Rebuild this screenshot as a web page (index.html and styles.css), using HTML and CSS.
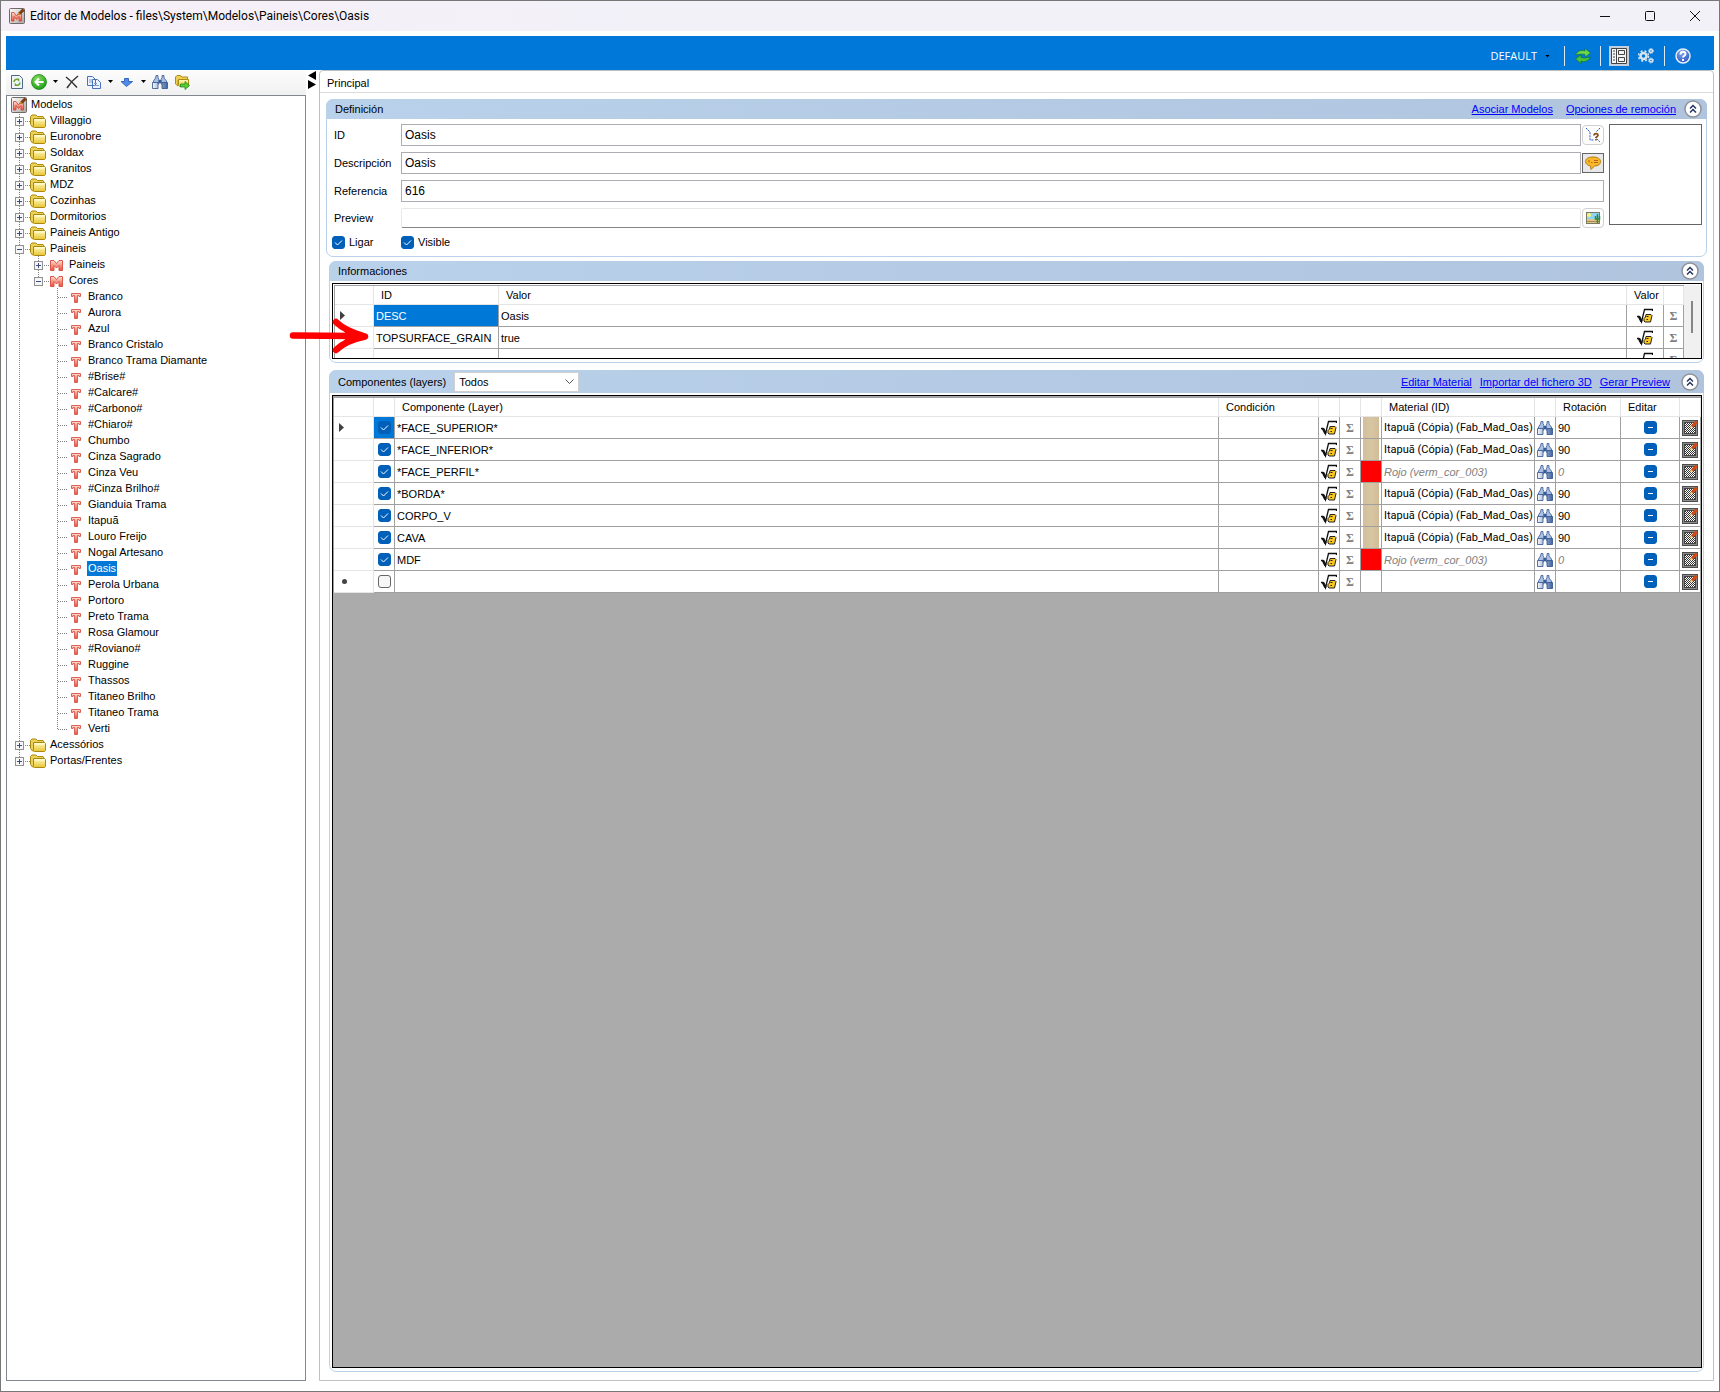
FILE: index.html
```html
<!DOCTYPE html>
<html lang="es">
<head>
<meta charset="utf-8">
<meta name="viewport" content="width=device-width, initial-scale=1">
<title>Editor de Modelos</title>
<link rel="stylesheet" href="styles.css">
</head>
<body>
<svg class="defs" aria-hidden="true">
  <defs>
    <linearGradient id="gold" x1="0" y1="0" x2="0" y2="1"><stop offset="0" stop-color="#fffbc0"/><stop offset="1" stop-color="#e9c32e"/></linearGradient>
    <linearGradient id="red" x1="0" y1="0" x2="0" y2="1"><stop offset="0" stop-color="#fde0cf"/><stop offset="1" stop-color="#ee4a34"/></linearGradient>
    <linearGradient id="silver" x1="0" y1="0" x2="1" y2="1"><stop offset="0" stop-color="#ffffff"/><stop offset="1" stop-color="#a8a4a0"/></linearGradient>
    <linearGradient id="steel" x1="0" y1="0" x2="1" y2="0"><stop offset="0" stop-color="#f4f8fc"/><stop offset="1" stop-color="#3f64a4"/></linearGradient>
    <radialGradient id="leaf" cx=".4" cy=".3" r=".8"><stop offset="0" stop-color="#8be060"/><stop offset="1" stop-color="#0f9410"/></radialGradient>
    <radialGradient id="orb" cx=".4" cy=".25" r=".9"><stop offset="0" stop-color="#86a8f0"/><stop offset="1" stop-color="#1c46b8"/></radialGradient>
    <pattern id="checker" width="2" height="2" patternUnits="userSpaceOnUse"><path fill="#fff" d="M0 0h2v2H0z"/><path fill="#333" d="M0 0h1v1H0zM1 1h1v1H1z"/></pattern>
  </defs>
  <symbol id="app" viewBox="0 0 16 16"><rect x=".5" y=".5" width="15" height="15" rx="1" fill="url(#silver)" stroke="#706a66"/><path d="M2.500 13V4.500h2.500l2.500 3.500 2.500-3.500h2.500V13h-2.500V8.500L7.500 11.500 5 8.500V13z" fill="url(#red)" stroke="#d8402c" stroke-width=".8"/><path d="M8.500 7l1-2.500L13.500.5 16 2.500 11.500 6.500z" fill="#7a3f12"/><path d="M8.500 7l1-2.500 1.500 1.500z" fill="#e8a33c"/></symbol>
  <symbol id="folder" viewBox="0 0 16 16"><path d="M.5 11.500v-8L2 2h4l1.500 1.500h5.500L14 5v2H4v7H2.500z" fill="#ecd058" stroke="#a98a10"/><path d="M3.500 5.500h11l1 1v7l-1 1h-10l-1-1z" fill="url(#gold)" stroke="#a98a10"/><path d="M4.500 7h10" stroke="#fffde0"/></symbol>
  <symbol id="m" viewBox="0 0 16 16"><path d="M1.500 13.500v-10h3.500L7.500 6.500 10 3.500h3.500v10H10V8.500L7.500 11 5 8.500v5z" fill="url(#red)" stroke="#d9574b"/></symbol>
  <symbol id="t" viewBox="0 0 16 16"><path d="M3.500 4.500h9v3H11V6.500H9.500v7h-3v-7H5v1H3.500z" fill="url(#red)" stroke="#d9625a"/></symbol>
  <symbol id="binoc" viewBox="0 0 16 16"><path d="M4 1.500h2v2l1 2V10H1.500V7L3.500 4z M10 1.500h2v2.500l2.500 3v3H9V5.500l1-2z" fill="#a9c0e2" stroke="#3a5c96" stroke-width=".8"/><path d="M6.500 6h3v3h-3z" fill="#3a5c96"/><path d="M.5 8.500h5.500v6H.5zM10 8.500h5.500v6H10z" fill="url(#steel)" stroke="#2c508c" stroke-width=".8"/></symbol>
  <symbol id="root" viewBox="0 0 16 16"><path d="M0 8.500h2l2.500 5.500L7.500 1.500H15.500V3" fill="none" stroke="#111" stroke-width="1.300"/><path d="M2 8.500l2.500 5" stroke="#111" stroke-width="2.500"/><path d="M9 6.500h5l1 1-1.500 6.500H8l-1-1v-2.500l1.500-1.500z" fill="#fcc81e" stroke="#222"/><path d="M9.500 8.500h2M9.500 11.500h1.500" stroke="#222" stroke-width="1.200"/></symbol>
  <symbol id="paint" viewBox="0 0 16 16"><rect x=".5" y=".5" width="15" height="15" fill="#8c8c8c" stroke="#4c4c4c"/><rect x="2.500" y="2.500" width="11" height="11" fill="url(#checker)" stroke="#444"/><path d="M9 5.500L13.500.5 16 3l-5 4.500z" fill="#d14a12"/><path d="M7.500 8.500l1.500-3 2 2z" fill="#f4d28a"/></symbol>
  <symbol id="up" viewBox="0 0 18 18"><circle cx="9" cy="9" r="8" fill="#fff" stroke="#8f9299" stroke-width="1.500"/><path d="M6 8.500l3-3 3 3M6 12.500l3-3 3 3" fill="none" stroke="#26355e" stroke-width="1.500"/></symbol>
</svg>

<div class="window">
  <header class="titlebar">
    <svg class="i16"><use href="#app"/></svg>
    <h1>Editor de Modelos - files\System\Modelos\Paineis\Cores\Oasis</h1>
    <button class="winbtn" aria-label="Minimizar"><svg width="12" height="12"><path d="M1 6.500h10" stroke="#111"/></svg></button>
    <button class="winbtn" aria-label="Maximizar"><svg width="12" height="12"><rect x="1.500" y="1.500" width="9" height="9" rx="1" fill="none" stroke="#111"/></svg></button>
    <button class="winbtn" aria-label="Cerrar"><svg width="12" height="12"><path d="M1 1l10 10M11 1L1 11" stroke="#111"/></svg></button>
  </header>

  <div class="ribbon">
    <button class="profile">DEFAULT <i class="caret"></i></button>
    <span class="bar"></span>
    <button class="tool" aria-label="Actualizar"><svg class="i16" viewBox="0 0 16 16"><path d="M.5 7C2 3.500 6 1.500 10 3V.5L15.500 5 10 9V6.500C7 5.500 4 6 .5 7z" fill="#6ed84c" stroke="#157018" stroke-width=".6"/><path d="M15.500 9C14 12.500 10 14.500 6 13v2.500L.5 11 6 7v2.500c3 1 6 .5 9.500-.5z" fill="#4cc23c" stroke="#157018" stroke-width=".6"/></svg></button>
    <span class="bar"></span>
    <button class="tool active" aria-label="Formulario"><svg width="16" height="16"><path fill="#f4f4f4" stroke="#444" d="M.5.5h15v15H.5z"/><path d="M5.500 0v16M7.500 2.500h6v4h-6zM7.500 9.500h6v4h-6z" fill="none" stroke="#444"/><path d="M2 3h2M2 6h2M2 9h2M2 12h2" stroke="#444"/></svg></button>
    <button class="tool" aria-label="Ajustes"><svg width="16" height="16" fill="none" stroke="#d9e4ee"><circle cx="5.500" cy="8" r="3" stroke-width="2.500"/><circle cx="5.500" cy="8" r="5" stroke-width="1.500" stroke-dasharray="2 2"/><circle cx="13" cy="3" r="1.500" stroke-width="1.500"/><circle cx="13" cy="3" r="2.500" stroke-dasharray="1 1"/><circle cx="13" cy="12.500" r="1.500" stroke-width="1.500"/><circle cx="13" cy="12.500" r="2.500" stroke-dasharray="1 1"/></svg></button>
    <span class="bar"></span>
    <button class="tool" aria-label="Ayuda"><svg width="16" height="16"><circle cx="8" cy="8" r="7" fill="url(#orb)" stroke="#e8eefa" stroke-width="1.500"/><path d="M5.500 6.500C5.500 3 10.500 3 10.500 6c0 1.500-2.500 2-2.500 3.500M8 11v2" fill="none" stroke="#fff" stroke-width="2"/></svg></button>
  </div>

  <div class="workspace">
    <aside class="side">
      <div class="toolbar">
        <button class="tb" aria-label="Recargar"><svg class="i16"><path d="M2.500 1.500h8l3 3v10h-11z" fill="#eef4fa" stroke="#4d6a85"/><path d="M5 8c0-2.500 3-3.500 4.500-2V4.500M11 8.500c0 2.500-3 3.500-4.500 2V12" fill="none" stroke="#6ba32c" stroke-width="1.500"/></svg></button>
        <button class="tb" aria-label="Atrás"><svg class="i16"><circle cx="8" cy="8" r="7.500" fill="url(#leaf)" stroke="#108010" stroke-width=".7"/><path d="M12.500 8H5M8 4.500L4.500 8 8 11.500" fill="none" stroke="#fff" stroke-width="2"/></svg><i class="caret"></i></button>
        <button class="tb" aria-label="Eliminar"><svg class="i16"><path d="M2 3C6 6 10 10 13 13.500M14 2C10 5 6 9 3 14" stroke="#333" stroke-width="1.500" fill="none"/></svg></button>
        <button class="tb" aria-label="Copiar"><svg class="i16"><path d="M1.500 2.500h5l3 3v6h-8zM6.500 5.500h5l3 3v6h-8z" fill="#eef4ff" stroke="#4a70b8"/><path d="M3 6h4M3 8h3M8 9.500h3M8 11.500h5" stroke="#7d9cd4"/></svg><i class="caret"></i></button>
        <button class="tb" aria-label="Bajar"><svg class="i16"><path d="M5.500 4.500h4v3h4L7.500 12.500 2 7.500h3.500z" fill="#4f8ae8" stroke="#3468c0"/></svg><i class="caret"></i></button>
        <button class="tb" aria-label="Buscar"><svg class="i16"><use href="#binoc"/></svg></button>
        <button class="tb" aria-label="Exportar"><svg class="i16"><path d="M1.500 10V3L3 1.500h3.500L8 3h5.500v3H4v6z" fill="#ecd058" stroke="#b08c10"/><path d="M4.500 5.500h10v7h-9l-1-1z" fill="url(#gold)" stroke="#b08c10"/><path d="M6.500 10H11V7.500l4.500 4-4.500 4V13H6.500z" fill="#5ccc34" stroke="#1f8a16" stroke-width=".8"/></svg></button>
      </div>
      <nav class="tree">
        <div class="row root"><svg class="i16"><use href="#app"/></svg><a href="#">Modelos</a></div>
        <ul>
          <li><div class="row"><button class="exp plus" aria-label="Abrir"></button><i class="stub"></i><svg class="i16"><use href="#folder"/></svg><a href="#">Villaggio</a></div></li>
          <li><div class="row"><button class="exp plus" aria-label="Abrir"></button><i class="stub"></i><svg class="i16"><use href="#folder"/></svg><a href="#">Euronobre</a></div></li>
          <li><div class="row"><button class="exp plus" aria-label="Abrir"></button><i class="stub"></i><svg class="i16"><use href="#folder"/></svg><a href="#">Soldax</a></div></li>
          <li><div class="row"><button class="exp plus" aria-label="Abrir"></button><i class="stub"></i><svg class="i16"><use href="#folder"/></svg><a href="#">Granitos</a></div></li>
          <li><div class="row"><button class="exp plus" aria-label="Abrir"></button><i class="stub"></i><svg class="i16"><use href="#folder"/></svg><a href="#">MDZ</a></div></li>
          <li><div class="row"><button class="exp plus" aria-label="Abrir"></button><i class="stub"></i><svg class="i16"><use href="#folder"/></svg><a href="#">Cozinhas</a></div></li>
          <li><div class="row"><button class="exp plus" aria-label="Abrir"></button><i class="stub"></i><svg class="i16"><use href="#folder"/></svg><a href="#">Dormitorios</a></div></li>
          <li><div class="row"><button class="exp plus" aria-label="Abrir"></button><i class="stub"></i><svg class="i16"><use href="#folder"/></svg><a href="#">Paineis Antigo</a></div></li>
          <li><div class="row"><button class="exp" aria-label="Cerrar"></button><i class="stub"></i><svg class="i16"><use href="#folder"/></svg><a href="#">Paineis</a></div>
            <ul>
              <li><div class="row"><button class="exp plus" aria-label="Abrir"></button><i class="stub"></i><svg class="i16"><use href="#m"/></svg><a href="#">Paineis</a></div></li>
              <li><div class="row"><button class="exp" aria-label="Cerrar"></button><i class="stub"></i><svg class="i16"><use href="#m"/></svg><a href="#">Cores</a></div>
                <ul class="leaves">
                  <li><div class="row"><i class="stub"></i><svg class="i16"><use href="#t"/></svg><a href="#">Branco</a></div></li>
                  <li><div class="row"><i class="stub"></i><svg class="i16"><use href="#t"/></svg><a href="#">Aurora</a></div></li>
                  <li><div class="row"><i class="stub"></i><svg class="i16"><use href="#t"/></svg><a href="#">Azul</a></div></li>
                  <li><div class="row"><i class="stub"></i><svg class="i16"><use href="#t"/></svg><a href="#">Branco Cristalo</a></div></li>
                  <li><div class="row"><i class="stub"></i><svg class="i16"><use href="#t"/></svg><a href="#">Branco Trama Diamante</a></div></li>
                  <li><div class="row"><i class="stub"></i><svg class="i16"><use href="#t"/></svg><a href="#">#Brise#</a></div></li>
                  <li><div class="row"><i class="stub"></i><svg class="i16"><use href="#t"/></svg><a href="#">#Calcare#</a></div></li>
                  <li><div class="row"><i class="stub"></i><svg class="i16"><use href="#t"/></svg><a href="#">#Carbono#</a></div></li>
                  <li><div class="row"><i class="stub"></i><svg class="i16"><use href="#t"/></svg><a href="#">#Chiaro#</a></div></li>
                  <li><div class="row"><i class="stub"></i><svg class="i16"><use href="#t"/></svg><a href="#">Chumbo</a></div></li>
                  <li><div class="row"><i class="stub"></i><svg class="i16"><use href="#t"/></svg><a href="#">Cinza Sagrado</a></div></li>
                  <li><div class="row"><i class="stub"></i><svg class="i16"><use href="#t"/></svg><a href="#">Cinza Veu</a></div></li>
                  <li><div class="row"><i class="stub"></i><svg class="i16"><use href="#t"/></svg><a href="#">#Cinza Brilho#</a></div></li>
                  <li><div class="row"><i class="stub"></i><svg class="i16"><use href="#t"/></svg><a href="#">Gianduia Trama</a></div></li>
                  <li><div class="row"><i class="stub"></i><svg class="i16"><use href="#t"/></svg><a href="#">Itapuã</a></div></li>
                  <li><div class="row"><i class="stub"></i><svg class="i16"><use href="#t"/></svg><a href="#">Louro Freijo</a></div></li>
                  <li><div class="row"><i class="stub"></i><svg class="i16"><use href="#t"/></svg><a href="#">Nogal Artesano</a></div></li>
                  <li><div class="row"><i class="stub"></i><svg class="i16"><use href="#t"/></svg><a href="#" class="sel" aria-current="true">Oasis</a></div></li>
                  <li><div class="row"><i class="stub"></i><svg class="i16"><use href="#t"/></svg><a href="#">Perola Urbana</a></div></li>
                  <li><div class="row"><i class="stub"></i><svg class="i16"><use href="#t"/></svg><a href="#">Portoro</a></div></li>
                  <li><div class="row"><i class="stub"></i><svg class="i16"><use href="#t"/></svg><a href="#">Preto Trama</a></div></li>
                  <li><div class="row"><i class="stub"></i><svg class="i16"><use href="#t"/></svg><a href="#">Rosa Glamour</a></div></li>
                  <li><div class="row"><i class="stub"></i><svg class="i16"><use href="#t"/></svg><a href="#">#Roviano#</a></div></li>
                  <li><div class="row"><i class="stub"></i><svg class="i16"><use href="#t"/></svg><a href="#">Ruggine</a></div></li>
                  <li><div class="row"><i class="stub"></i><svg class="i16"><use href="#t"/></svg><a href="#">Thassos</a></div></li>
                  <li><div class="row"><i class="stub"></i><svg class="i16"><use href="#t"/></svg><a href="#">Titaneo Brilho</a></div></li>
                  <li><div class="row"><i class="stub"></i><svg class="i16"><use href="#t"/></svg><a href="#">Titaneo Trama</a></div></li>
                  <li><div class="row"><i class="stub"></i><svg class="i16"><use href="#t"/></svg><a href="#">Verti</a></div></li>
                </ul>
              </li>
            </ul>
          </li>
          <li><div class="row"><button class="exp plus" aria-label="Abrir"></button><i class="stub"></i><svg class="i16"><use href="#folder"/></svg><a href="#">Acessórios</a></div></li>
          <li><div class="row"><button class="exp plus" aria-label="Abrir"></button><i class="stub"></i><svg class="i16"><use href="#folder"/></svg><a href="#">Portas/Frentes</a></div></li>
        </ul>
      </nav>
    </aside>

    <div class="splitter"><svg width="10" height="18"><path d="M9 0v9L1 4.500zM1 9v9l8-4.500z"/></svg></div>

    <main class="page">
      <h2 class="tab">Principal</h2>
      <div class="content">
        <section class="card wide">
          <div class="head"><h3>Definición</h3><a class="spaced" href="#">Asociar Modelos</a><a class="spaced" href="#">Opciones de remoción</a><button class="fold" aria-label="Contraer"><svg width="18" height="18"><use href="#up"/></svg></button></div>
          <div class="def">
            <form class="fields">
              <label for="id">ID</label>
              <div class="field"><input id="id" type="text" value="Oasis"><button type="button" class="side-btn" aria-label="Buscar ID"><svg class="i16"><path d="M1 1l4 4v8h4M15 1l-4 4M10 10l5 5" fill="none" stroke="#2456c4" stroke-dasharray="2 1"/><path d="M9 8.500c0-2.500 4-2.500 4 0 0 1-2 1-2 2.500M11 12v1.500" fill="none" stroke="#8a4a10" stroke-width="1.600"/></svg></button></div>
              <label for="desc">Descripción</label>
              <div class="field"><input id="desc" type="text" value="Oasis"><button type="button" class="side-btn pressed" aria-label="Comentario"><svg class="i16"><path d="M8 2C3 2 .5 4 .5 6.500S3 10.500 5.500 11L6 14.500l3.500-3.500c4 0 6-2 6-4.500S13 2 8 2z" fill="#f7b92a" stroke="#b77a10"/><path d="M4 5v2.500M6 7.500h1.500M9 5.500h4M9 7.500h4" fill="none" stroke="#c0621a"/></svg></button></div>
              <label for="ref">Referencia</label>
              <div class="field"><input id="ref" type="text" value="616"></div>
              <label for="prev">Preview</label>
              <div class="field"><input id="prev" class="flat" type="text" readonly><button type="button" class="side-btn" aria-label="Elegir imagen"><svg class="i16"><rect x="1.500" y="2.500" width="13" height="11" fill="#8ed4f4" stroke="#7a7a60"/><path d="M2 9h12v4H2z" fill="#dcc48c"/><path d="M2 11.500h12" stroke="#a98952"/><circle cx="4" cy="5" r="2" fill="#fff27a"/><path d="M12.500 4v9M10.500 6v3h4V6" stroke="#2a8a3a" stroke-width="1.500" fill="none"/></svg></button></div>
            </form>
            <div class="thumb"></div>
          </div>
          <div class="checks"><label><input type="checkbox" checked>Ligar</label><label><input type="checkbox" checked>Visible</label></div>
        </section>

        <section class="card info">
          <div class="head"><h3>Informaciones</h3><button class="fold" aria-label="Contraer"><svg width="18" height="18"><use href="#up"/></svg></button></div>
          <div class="frame clip">
            <table>
              <colgroup><col class="w39"><col class="w125"><col><col class="w37"><col class="w20"></colgroup>
              <thead><tr><th></th><th>ID</th><th>Valor</th><th>Valor</th><th></th></tr></thead>
              <tbody>
                <tr><td class="rh"><i class="cur"></i></td><td class="selcell">DESC</td><td>Oasis</td><td class="ic"><svg class="i16"><use href="#root"/></svg></td><td class="sig">Σ</td></tr>
                <tr><td class="rh"></td><td>TOPSURFACE_GRAIN</td><td>true</td><td class="ic"><svg class="i16"><use href="#root"/></svg></td><td class="sig">Σ</td></tr>
                <tr><td class="rh"></td><td></td><td></td><td class="ic"><svg class="i16"><use href="#root"/></svg></td><td class="sig">Σ</td></tr>
              </tbody>
            </table>
            <div class="scroll"><i></i></div>
          </div>
          <svg class="arrow" width="80" height="36" viewBox="0 0 80 36" aria-hidden="true"><path d="M4 17.500L66 18M47 4C54 11 64 15 76 18.500M47 32C54 25 64 21 76 18.500" fill="none" stroke="#f00" stroke-width="6.500" stroke-linecap="round"/><path d="M52 8L78 18.500 52 28 58 18z" fill="#f00"/></svg>
        </section>

        <section class="card comp">
          <div class="head tall"><h3><label for="layers">Componentes (layers)</label></h3><select id="layers"><option>Todos</option></select><span class="grow"></span><a href="#">Editar Material</a><a href="#">Importar del fichero 3D</a><a href="#">Gerar Preview</a><button class="fold" aria-label="Contraer"><svg width="18" height="18"><use href="#up"/></svg></button></div>
          <div class="frame fill">
            <table>
              <colgroup><col class="w40"><col class="w21"><col><col class="w100"><col class="w21"><col class="w21"><col class="w21"><col class="w153"><col class="w21"><col class="w65"><col class="w59"><col class="w21"></colgroup>
              <thead><tr><th></th><th></th><th>Componente (Layer)</th><th>Condición</th><th></th><th></th><th></th><th>Material (ID)</th><th></th><th>Rotación</th><th>Editar</th><th></th></tr></thead>
              <tbody>
                <tr><td class="rh"><i class="cur"></i></td><td class="ic selcell"><input type="checkbox" checked aria-label="Activo"></td><td>*FACE_SUPERIOR*</td><td></td><td class="ic"><svg class="i16"><use href="#root"/></svg></td><td class="sig">Σ</td><td class="wood"></td><td class="mat">Itapuã (Cópia) (Fab_Mad_Oas)</td><td class="ic"><svg class="i16"><use href="#binoc"/></svg></td><td>90</td><td class="ic"><input type="checkbox" class="mixed" aria-label="Editar"></td><td class="ic"><svg class="i16"><use href="#paint"/></svg></td></tr>
                <tr><td class="rh"></td><td class="ic"><input type="checkbox" checked aria-label="Activo"></td><td>*FACE_INFERIOR*</td><td></td><td class="ic"><svg class="i16"><use href="#root"/></svg></td><td class="sig">Σ</td><td class="wood"></td><td class="mat">Itapuã (Cópia) (Fab_Mad_Oas)</td><td class="ic"><svg class="i16"><use href="#binoc"/></svg></td><td>90</td><td class="ic"><input type="checkbox" class="mixed" aria-label="Editar"></td><td class="ic"><svg class="i16"><use href="#paint"/></svg></td></tr>
                <tr><td class="rh"></td><td class="ic"><input type="checkbox" checked aria-label="Activo"></td><td>*FACE_PERFIL*</td><td></td><td class="ic"><svg class="i16"><use href="#root"/></svg></td><td class="sig">Σ</td><td class="rojo"></td><td class="def-val">Rojo (verm_cor_003)</td><td class="ic"><svg class="i16"><use href="#binoc"/></svg></td><td class="def-val">0</td><td class="ic"><input type="checkbox" class="mixed" aria-label="Editar"></td><td class="ic"><svg class="i16"><use href="#paint"/></svg></td></tr>
                <tr><td class="rh"></td><td class="ic"><input type="checkbox" checked aria-label="Activo"></td><td>*BORDA*</td><td></td><td class="ic"><svg class="i16"><use href="#root"/></svg></td><td class="sig">Σ</td><td class="wood"></td><td class="mat">Itapuã (Cópia) (Fab_Mad_Oas)</td><td class="ic"><svg class="i16"><use href="#binoc"/></svg></td><td>90</td><td class="ic"><input type="checkbox" class="mixed" aria-label="Editar"></td><td class="ic"><svg class="i16"><use href="#paint"/></svg></td></tr>
                <tr><td class="rh"></td><td class="ic"><input type="checkbox" checked aria-label="Activo"></td><td>CORPO_V</td><td></td><td class="ic"><svg class="i16"><use href="#root"/></svg></td><td class="sig">Σ</td><td class="wood"></td><td class="mat">Itapuã (Cópia) (Fab_Mad_Oas)</td><td class="ic"><svg class="i16"><use href="#binoc"/></svg></td><td>90</td><td class="ic"><input type="checkbox" class="mixed" aria-label="Editar"></td><td class="ic"><svg class="i16"><use href="#paint"/></svg></td></tr>
                <tr><td class="rh"></td><td class="ic"><input type="checkbox" checked aria-label="Activo"></td><td>CAVA</td><td></td><td class="ic"><svg class="i16"><use href="#root"/></svg></td><td class="sig">Σ</td><td class="wood"></td><td class="mat">Itapuã (Cópia) (Fab_Mad_Oas)</td><td class="ic"><svg class="i16"><use href="#binoc"/></svg></td><td>90</td><td class="ic"><input type="checkbox" class="mixed" aria-label="Editar"></td><td class="ic"><svg class="i16"><use href="#paint"/></svg></td></tr>
                <tr><td class="rh"></td><td class="ic"><input type="checkbox" checked aria-label="Activo"></td><td>MDF</td><td></td><td class="ic"><svg class="i16"><use href="#root"/></svg></td><td class="sig">Σ</td><td class="rojo"></td><td class="def-val">Rojo (verm_cor_003)</td><td class="ic"><svg class="i16"><use href="#binoc"/></svg></td><td class="def-val">0</td><td class="ic"><input type="checkbox" class="mixed" aria-label="Editar"></td><td class="ic"><svg class="i16"><use href="#paint"/></svg></td></tr>
                <tr><td class="rh"><i class="new"></i></td><td class="ic"><input type="checkbox" aria-label="Activo"></td><td></td><td></td><td class="ic"><svg class="i16"><use href="#root"/></svg></td><td class="sig">Σ</td><td></td><td></td><td class="ic"><svg class="i16"><use href="#binoc"/></svg></td><td></td><td class="ic"><input type="checkbox" class="mixed" aria-label="Editar"></td><td class="ic"><svg class="i16"><use href="#paint"/></svg></td></tr>
              </tbody>
            </table>
          </div>
        </section>
      </div>
    </main>
  </div>
</div>
</body>
</html>
```
FILE: styles.css
```css
* { box-sizing: border-box; }
body {
  margin: 0;
  font: 11px/16px "Liberation Sans", Arial, sans-serif;
  color: #000;
  background: #fff;
}
h1, h2, h3 { margin: 0; font-size: inherit; font-weight: normal; }
button { margin: 0; padding: 0; border: 0; background: none; font: inherit; color: inherit; }
svg { display: block; flex: none; }
.defs { position: absolute; width: 0; height: 0; }
.i16 { width: 16px; height: 16px; }
.grow { flex: 1; }

.window {
  display: flex;
  flex-direction: column;
  min-height: 100vh;
  border: 1px solid #777;
  background: #fff;
}

.titlebar {
  display: flex;
  align-items: center;
  height: 30px;
  padding: 0 2px 0 8px;
  background: linear-gradient(90deg, #f7eff8, #f2f1f8 40%);
  font: 12px/16px Roboto, "Segoe UI", sans-serif;
}
.titlebar h1 { flex: 1; margin-left: 5px; }
.winbtn { display: flex; justify-content: center; width: 45px; }

.ribbon {
  display: flex;
  align-items: center;
  justify-content: flex-end;
  height: 34px;
  margin: 5px 5px 0;
  padding: 6px 21px 0 0;
  background: #0078d9;
  color: #fff;
  font: 11px/16px "Open Sans", "Segoe UI", sans-serif;
}
.profile { display: flex; align-items: center; gap: 8px; margin-right: 14px; }
.bar { width: 1px; height: 20px; background: #dceaf6; }
.tool { display: flex; align-items: center; justify-content: center; width: 20px; height: 20px; margin: 0 7px 0 8px; }
.tool.active { background: #c4d0e0; }
.tool.active + .tool { margin: 0 8px 0 0; }
.ribbon .tool:last-child { margin: 0 0 0 8px; }
.caret { width: 5px; height: 3px; background: #000; clip-path: polygon(0 0, 100% 0, 50% 100%); }

.workspace { flex: 1; display: flex; padding: 0 5px 10px; }
.side { display: flex; flex-direction: column; width: 300px; }
.toolbar {
  display: flex;
  align-items: center;
  gap: 6px;
  height: 25px;
  padding: 0 3px 2px;
  background: linear-gradient(#fdfdfd, #f0f0f0);
}
.tb { display: flex; align-items: center; gap: 6px; }
.tree { flex: 1; padding: 0 3px; border: 1px solid #828790; background: #fff; }
.tree ul { margin: 0; padding: 0 0 0 19px; list-style: none; }
.tree > ul { padding-left: 5px; }
.tree li { background: repeating-linear-gradient(#808080 0 1px, transparent 1px 2px) 4px 0 / 1px 100% no-repeat; }
.tree li:last-child { background: none; }
.tree li:last-child > .row { background: repeating-linear-gradient(#808080 0 1px, transparent 1px 2px) 4px 0 / 1px 9px no-repeat; }
.row { display: flex; align-items: center; height: 16px; }
.row svg { margin-top: 2px; }
.row a { margin-left: 3px; padding: 0 1px; line-height: 15px; color: #000; text-decoration: none; }
.row a.sel { background: #0078d7; color: #fff; }
.row.root svg { margin-left: 1px; }
.exp {
  width: 9px;
  height: 9px;
  margin-top: 2px;
  border: 1px solid #919191;
  background: linear-gradient(#3a4d8a, #3a4d8a) center / 5px 1px no-repeat, #f6f6f6;
}
.exp.plus { background: linear-gradient(#3a4d8a, #3a4d8a) center / 5px 1px no-repeat, linear-gradient(#3a4d8a, #3a4d8a) center / 1px 5px no-repeat, #f6f6f6; }
.stub { width: 6px; height: 1px; margin-top: 2px; background: repeating-linear-gradient(90deg, transparent 0 1px, #808080 1px 2px); }
.leaves .stub { width: 11px; margin-left: 4px; }

.splitter { width: 13px; padding: 1px 0 0 1px; }

.page { flex: 1; display: flex; flex-direction: column; min-width: 0; border: 1px solid #c0c0c0; border-radius: 4px 4px 0 0; }
.tab { height: 22px; padding: 4px 7px 0; border-bottom: 1px solid #dcdcdc; }
.content { flex: 1; display: flex; flex-direction: column; padding: 6px 9px 8px; }
.card {
  position: relative;
  border: 1px solid #b9d1ea;
  border-radius: 7px;
  background: #fff;
}
.card.wide { height: 158px; margin: 0 -3px; }
.card.info { height: 102px; margin-top: 4px; }
.card.comp { flex: 1; display: flex; flex-direction: column; margin-top: 7px; padding-bottom: 3px; }
.head {
  display: flex;
  align-items: center;
  gap: 8px;
  height: 20px;
  margin: -1px -1px 0;
  padding: 0 5px 0 9px;
  border-radius: 7px 7px 0 0;
  background: linear-gradient(90deg, #b9d1ea, #b0c4de);
}
.head h3 { margin-right: auto; }
.head a { color: #00f; }
.head .spaced { margin-left: 5px; }
.head.tall { height: 23px; }
.head.tall h3 { margin-right: 0; }
.head.tall .fold { margin-left: 3px; }
select {
  width: 125px;
  height: 20px;
  padding: 0 4px;
  border: 1px solid #d0d0d0;
  border-radius: 0;
  appearance: none;
  background: #fff url("data:image/svg+xml,%3Csvg xmlns='http://www.w3.org/2000/svg' width='9' height='5'%3E%3Cpath d='M.5.5l4 4 4-4' fill='none' stroke='%23555'/%3E%3C/svg%3E") right 4px center no-repeat;
  font: 11px/16px "Liberation Sans", Arial, sans-serif;
  color: #000;
}

.def { display: flex; gap: 5px; padding: 5px 4px 0 7px; }
.fields { flex: 1; display: grid; grid-template-columns: 67px 1fr; row-gap: 6px; align-items: center; }
.field { display: flex; align-items: center; gap: 1px; }
.field input {
  flex: 1;
  min-width: 0;
  height: 22px;
  padding: 0 3px;
  border: 1px solid #abadb3;
  background: #fff;
  font: 12px/16px "Liberation Sans", Arial, sans-serif;
  color: #000;
}
.field input.flat { height: 20px; border-color: #e8e8e8; border-bottom-color: #868686; border-radius: 2px; }
.side-btn { display: flex; align-items: center; justify-content: center; width: 22px; height: 20px; border: 1px solid #d0d0d0; border-radius: 4px; background: #fdfdfd; }
.side-btn.pressed { border-color: #666; border-radius: 0; background: #e8e8e8; }
.thumb { width: 93px; height: 101px; border: 1px solid #646464; }
.checks { display: flex; margin-top: 6px; padding-left: 5px; }
.checks label { display: flex; align-items: center; gap: 4px; width: 69px; }
input[type="checkbox"] {
  appearance: none;
  display: block;
  flex: none;
  width: 13px;
  height: 13px;
  margin: 0 auto;
  border: 1px solid #666;
  border-radius: 3px;
  background: #f6f6f6;
}
.checks input[type="checkbox"] { margin: 0; }
input[type="checkbox"]:checked {
  border-color: #005fb8;
  background: #005fb8 url("data:image/svg+xml,%3Csvg xmlns='http://www.w3.org/2000/svg' width='9' height='7'%3E%3Cpath d='M1 3.500l2.500 2.500 4.500-4.500' fill='none' stroke='%23fff'/%3E%3C/svg%3E") center no-repeat;
}
input[type="checkbox"].mixed { border-color: #005fb8; background: linear-gradient(#fff, #fff) center / 5px 1px no-repeat #005fb8; }

.frame { display: flex; align-items: flex-start; margin: 2px 1px 0 2px; padding: 1px 0 0 1px; border: 1px solid #000; background: #fff; }
.frame.clip { height: 76px; overflow: hidden; }
.frame.fill { flex: 1; padding: 1px 0 0; background: #ababab; }
.frame table { flex: 1; width: 0; border-collapse: separate; border-spacing: 0; table-layout: fixed; border: solid #a0a0a0; border-width: 1px 0 0 1px; background: #fff; }
th, td { padding: 0 2px; overflow: hidden; white-space: nowrap; text-align: left; font-weight: normal; }
th { height: 19px; padding-left: 7px; border: solid #e5e5e5; border-width: 0 1px 1px 0; }
td { height: 22px; border: solid #a0a0a0; border-width: 0 1px 1px 0; }
td.rh { border-color: #e5e5e5; }
td.ic, td.sig { padding: 0; text-align: center; }
td.ic svg { margin: 0 auto; }
td.sig { font: bold 12px/16px "Liberation Serif", serif; color: #808080; }
td.mat { font-family: Roboto, sans-serif; }
.selcell { background: #0078d7; color: #fff; }
.def-val { color: #808080; font-style: italic; }
.wood { background: linear-gradient(90deg, #fff 2px, #d2bf9b 2px, #d8c5a2 10px, #d0bd98 18px, #fff 18px); }
.rojo { background: #f00; }
.cur { display: block; width: 5px; height: 9px; margin-left: 3px; background: #404040; clip-path: polygon(0 0, 100% 50%, 0 100%); }
.new { display: block; width: 5px; height: 5px; margin-left: 6px; border-radius: 50%; background: #444; }
.w20 { width: 20px; } .w21 { width: 21px; } .w37 { width: 37px; } .w39 { width: 39px; } .w40 { width: 40px; } .w59 { width: 59px; }
.w65 { width: 65px; } .w100 { width: 100px; } .w125 { width: 125px; } .w153 { width: 153px; }
.scroll { align-self: stretch; width: 17px; padding: 16px 8px 0 7px; background: #f0f0f0; }
.scroll i { display: block; width: 2px; height: 32px; background: #868686; }
.arrow { position: absolute; left: -41px; top: 56px; }
```
